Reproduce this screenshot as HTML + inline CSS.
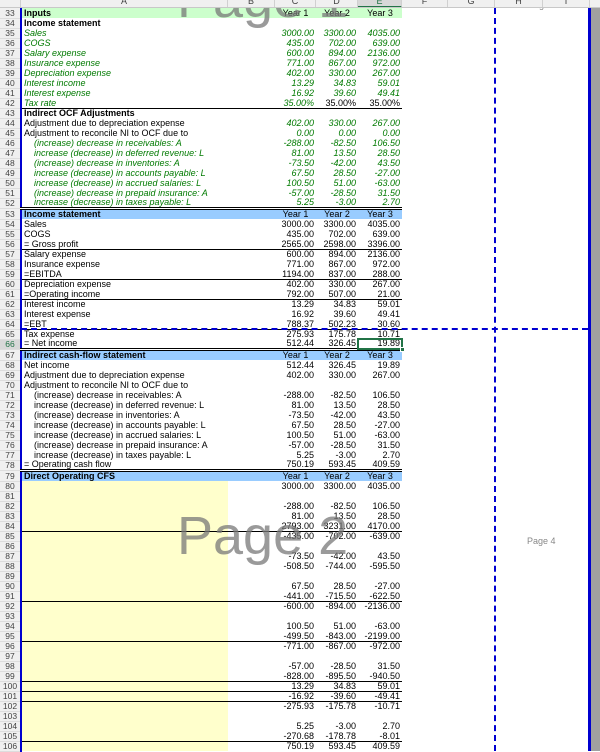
<!DOCTYPE html>
<html><head><meta charset="utf-8"><style>
*{margin:0;padding:0;box-sizing:border-box}
body{width:600px;height:751px;overflow:hidden;background:#fff;font-family:"Liberation Sans",sans-serif;position:relative}
#hdr{position:absolute;left:0;top:0;width:600px;height:8px;background:#f0f0f0;border-bottom:1px solid #c8c8c8;overflow:hidden;z-index:5}
#hdr div{position:absolute;top:-4px;height:12px;font-size:9px;color:#444;text-align:center;border-right:1px solid #d0d0d0}
table{position:absolute;left:0;top:8px;border-collapse:collapse;table-layout:fixed;font-size:9px;line-height:9px}
td{height:10px;padding:0 2px;white-space:nowrap;overflow:hidden;vertical-align:bottom}
td.h{background:#f0f0f0;color:#444;text-align:center;border-right:2px solid #0000d0;border-bottom:1px solid #ddd;font-size:8.5px;padding:0}
td.n{text-align:right}
tr.g td.l,tr.g td.n{color:#007a00;font-style:italic}
tr.b td.l{font-weight:bold}
tr.in td.l{padding-left:12px}
tr.lg td:not(.h){background:#ccffcc}
tr.bl td:not(.h){background:#99ccff}
tr.y td.l{background:#ffffcc}
tr.u td:not(.h){border-bottom:1px solid #000}
tr.d td:not(.h){border-bottom:3px double #000}
td.c{text-align:center}
.wm{position:absolute;font-size:54px;color:rgba(120,120,120,.75);line-height:1}
</style></head><body>
<div id="hdr">
<div style="left:0;width:21px"></div>
<div style="left:21px;width:207px">A</div>
<div style="left:228px;width:47px">B</div>
<div style="left:275px;width:41px">C</div>
<div style="left:316px;width:42px">D</div>
<div style="left:358px;width:44px;background:#d8d8d8;border-bottom:2px solid #217346;color:#217346">E</div>
<div style="left:402px;width:46px">F</div>
<div style="left:448px;width:47px">G</div>
<div style="left:495px;width:48px">H</div>
<div style="left:543px;width:47px">I</div>
</div>
<table>
<colgroup><col style="width:21px"><col style="width:207px"><col style="width:47px"><col style="width:41px"><col style="width:42px"><col style="width:44px"></colgroup>
<tr class="lg b"><td class="h">33</td><td class="l">Inputs</td><td></td><td class="c">Year 1</td><td class="c">Year 2</td><td class="c">Year 3</td></tr>
<tr class="b"><td class="h">34</td><td class="l">Income statement</td><td></td><td></td><td></td><td></td></tr>
<tr class="g"><td class="h">35</td><td class="l">Sales</td><td></td><td class="n">3000.00</td><td class="n">3300.00</td><td class="n">4035.00</td></tr>
<tr class="g"><td class="h">36</td><td class="l">COGS</td><td></td><td class="n">435.00</td><td class="n">702.00</td><td class="n">639.00</td></tr>
<tr class="g"><td class="h">37</td><td class="l">Salary expense</td><td></td><td class="n">600.00</td><td class="n">894.00</td><td class="n">2136.00</td></tr>
<tr class="g"><td class="h">38</td><td class="l">Insurance expense</td><td></td><td class="n">771.00</td><td class="n">867.00</td><td class="n">972.00</td></tr>
<tr class="g"><td class="h">39</td><td class="l">Depreciation expense</td><td></td><td class="n">402.00</td><td class="n">330.00</td><td class="n">267.00</td></tr>
<tr class="g"><td class="h">40</td><td class="l">Interest income</td><td></td><td class="n">13.29</td><td class="n">34.83</td><td class="n">59.01</td></tr>
<tr class="g"><td class="h">41</td><td class="l">Interest expense</td><td></td><td class="n">16.92</td><td class="n">39.60</td><td class="n">49.41</td></tr>
<tr class="g u"><td class="h">42</td><td class="l">Tax rate</td><td></td><td class="n">35.00%</td><td class="n" style="color:#000;font-style:normal">35.00%</td><td class="n" style="color:#000;font-style:normal">35.00%</td></tr>
<tr class="b"><td class="h">43</td><td class="l">Indirect OCF Adjustments</td><td></td><td></td><td></td><td></td></tr>
<tr class="g"><td class="h">44</td><td class="l" style="color:#000;font-style:normal">Adjustment due to depreciation expense</td><td></td><td class="n">402.00</td><td class="n">330.00</td><td class="n">267.00</td></tr>
<tr class="g"><td class="h">45</td><td class="l" style="color:#000;font-style:normal">Adjustment to reconcile NI to OCF due to</td><td></td><td class="n">0.00</td><td class="n">0.00</td><td class="n">0.00</td></tr>
<tr class="g in"><td class="h">46</td><td class="l">(increase) decrease in receivables: A</td><td></td><td class="n">-288.00</td><td class="n">-82.50</td><td class="n">106.50</td></tr>
<tr class="g in"><td class="h">47</td><td class="l">increase (decrease) in deferred revenue: L</td><td></td><td class="n">81.00</td><td class="n">13.50</td><td class="n">28.50</td></tr>
<tr class="g in"><td class="h">48</td><td class="l">(increase) decrease in inventories: A</td><td></td><td class="n">-73.50</td><td class="n">-42.00</td><td class="n">43.50</td></tr>
<tr class="g in"><td class="h">49</td><td class="l">increase (decrease) in accounts payable: L</td><td></td><td class="n">67.50</td><td class="n">28.50</td><td class="n">-27.00</td></tr>
<tr class="g in"><td class="h">50</td><td class="l">increase (decrease) in accrued salaries: L</td><td></td><td class="n">100.50</td><td class="n">51.00</td><td class="n">-63.00</td></tr>
<tr class="g in"><td class="h">51</td><td class="l">(increase) decrease in prepaid insurance: A</td><td></td><td class="n">-57.00</td><td class="n">-28.50</td><td class="n">31.50</td></tr>
<tr class="g in d"><td class="h">52</td><td class="l">increase (decrease) in taxes payable: L</td><td></td><td class="n">5.25</td><td class="n">-3.00</td><td class="n">2.70</td></tr>
<tr class="bl b"><td class="h">53</td><td class="l">Income statement</td><td></td><td class="c">Year 1</td><td class="c">Year 2</td><td class="c">Year 3</td></tr>
<tr><td class="h">54</td><td class="l">Sales</td><td></td><td class="n">3000.00</td><td class="n">3300.00</td><td class="n">4035.00</td></tr>
<tr><td class="h">55</td><td class="l">COGS</td><td></td><td class="n">435.00</td><td class="n">702.00</td><td class="n">639.00</td></tr>
<tr class="u"><td class="h">56</td><td class="l">= Gross profit</td><td></td><td class="n">2565.00</td><td class="n">2598.00</td><td class="n">3396.00</td></tr>
<tr><td class="h">57</td><td class="l">Salary expense</td><td></td><td class="n">600.00</td><td class="n">894.00</td><td class="n">2136.00</td></tr>
<tr><td class="h">58</td><td class="l">Insurance expense</td><td></td><td class="n">771.00</td><td class="n">867.00</td><td class="n">972.00</td></tr>
<tr class="u"><td class="h">59</td><td class="l">=EBITDA</td><td></td><td class="n">1194.00</td><td class="n">837.00</td><td class="n">288.00</td></tr>
<tr><td class="h">60</td><td class="l">Depreciation expense</td><td></td><td class="n">402.00</td><td class="n">330.00</td><td class="n">267.00</td></tr>
<tr class="u"><td class="h">61</td><td class="l">=Operating income</td><td></td><td class="n">792.00</td><td class="n">507.00</td><td class="n">21.00</td></tr>
<tr><td class="h">62</td><td class="l">Interest income</td><td></td><td class="n">13.29</td><td class="n">34.83</td><td class="n">59.01</td></tr>
<tr><td class="h">63</td><td class="l">Interest expense</td><td></td><td class="n">16.92</td><td class="n">39.60</td><td class="n">49.41</td></tr>
<tr class="u"><td class="h">64</td><td class="l">=EBT</td><td></td><td class="n">788.37</td><td class="n">502.23</td><td class="n">30.60</td></tr>
<tr><td class="h">65</td><td class="l">Tax expense</td><td></td><td class="n">275.93</td><td class="n">175.78</td><td class="n">10.71</td></tr>
<tr class="d"><td class="h" style="color:#217346;background:#d8d8d8">66</td><td class="l">= Net income</td><td></td><td class="n">512.44</td><td class="n">326.45</td><td class="n">19.89</td></tr>
<tr class="bl b"><td class="h">67</td><td class="l">Indirect cash-flow statement</td><td></td><td class="c">Year 1</td><td class="c">Year 2</td><td class="c">Year 3</td></tr>
<tr><td class="h">68</td><td class="l">Net income</td><td></td><td class="n">512.44</td><td class="n">326.45</td><td class="n">19.89</td></tr>
<tr><td class="h">69</td><td class="l">Adjustment due to depreciation expense</td><td></td><td class="n">402.00</td><td class="n">330.00</td><td class="n">267.00</td></tr>
<tr><td class="h">70</td><td class="l">Adjustment to reconcile NI to OCF due to</td><td></td><td></td><td></td><td></td></tr>
<tr class="in"><td class="h">71</td><td class="l">(increase) decrease in receivables: A</td><td></td><td class="n">-288.00</td><td class="n">-82.50</td><td class="n">106.50</td></tr>
<tr class="in"><td class="h">72</td><td class="l">increase (decrease) in deferred revenue: L</td><td></td><td class="n">81.00</td><td class="n">13.50</td><td class="n">28.50</td></tr>
<tr class="in"><td class="h">73</td><td class="l">(increase) decrease in inventories: A</td><td></td><td class="n">-73.50</td><td class="n">-42.00</td><td class="n">43.50</td></tr>
<tr class="in"><td class="h">74</td><td class="l">increase (decrease) in accounts payable: L</td><td></td><td class="n">67.50</td><td class="n">28.50</td><td class="n">-27.00</td></tr>
<tr class="in"><td class="h">75</td><td class="l">increase (decrease) in accrued salaries: L</td><td></td><td class="n">100.50</td><td class="n">51.00</td><td class="n">-63.00</td></tr>
<tr class="in"><td class="h">76</td><td class="l">(increase) decrease in prepaid insurance: A</td><td></td><td class="n">-57.00</td><td class="n">-28.50</td><td class="n">31.50</td></tr>
<tr class="in"><td class="h">77</td><td class="l">increase (decrease) in taxes payable: L</td><td></td><td class="n">5.25</td><td class="n">-3.00</td><td class="n">2.70</td></tr>
<tr class="d"><td class="h">78</td><td class="l">= Operating cash flow</td><td></td><td class="n">750.19</td><td class="n">593.45</td><td class="n">409.59</td></tr>
<tr class="bl b"><td class="h">79</td><td class="l">Direct Operating CFS</td><td></td><td class="c">Year 1</td><td class="c">Year 2</td><td class="c">Year 3</td></tr>
<tr class="y"><td class="h">80</td><td class="l"></td><td></td><td class="n">3000.00</td><td class="n">3300.00</td><td class="n">4035.00</td></tr>
<tr class="y"><td class="h">81</td><td class="l"></td><td></td><td></td><td></td><td></td></tr>
<tr class="y"><td class="h">82</td><td class="l"></td><td></td><td class="n">-288.00</td><td class="n">-82.50</td><td class="n">106.50</td></tr>
<tr class="y"><td class="h">83</td><td class="l"></td><td></td><td class="n">81.00</td><td class="n">13.50</td><td class="n">28.50</td></tr>
<tr class="y u"><td class="h">84</td><td class="l"></td><td></td><td class="n">2793.00</td><td class="n">3231.00</td><td class="n">4170.00</td></tr>
<tr class="y"><td class="h">85</td><td class="l"></td><td></td><td class="n">-435.00</td><td class="n">-702.00</td><td class="n">-639.00</td></tr>
<tr class="y"><td class="h">86</td><td class="l"></td><td></td><td></td><td></td><td></td></tr>
<tr class="y"><td class="h">87</td><td class="l"></td><td></td><td class="n">-73.50</td><td class="n">-42.00</td><td class="n">43.50</td></tr>
<tr class="y"><td class="h">88</td><td class="l"></td><td></td><td class="n">-508.50</td><td class="n">-744.00</td><td class="n">-595.50</td></tr>
<tr class="y"><td class="h">89</td><td class="l"></td><td></td><td></td><td></td><td></td></tr>
<tr class="y"><td class="h">90</td><td class="l"></td><td></td><td class="n">67.50</td><td class="n">28.50</td><td class="n">-27.00</td></tr>
<tr class="y u"><td class="h">91</td><td class="l"></td><td></td><td class="n">-441.00</td><td class="n">-715.50</td><td class="n">-622.50</td></tr>
<tr class="y"><td class="h">92</td><td class="l"></td><td></td><td class="n">-600.00</td><td class="n">-894.00</td><td class="n">-2136.00</td></tr>
<tr class="y"><td class="h">93</td><td class="l"></td><td></td><td></td><td></td><td></td></tr>
<tr class="y"><td class="h">94</td><td class="l"></td><td></td><td class="n">100.50</td><td class="n">51.00</td><td class="n">-63.00</td></tr>
<tr class="y u"><td class="h">95</td><td class="l"></td><td></td><td class="n">-499.50</td><td class="n">-843.00</td><td class="n">-2199.00</td></tr>
<tr class="y"><td class="h">96</td><td class="l"></td><td></td><td class="n">-771.00</td><td class="n">-867.00</td><td class="n">-972.00</td></tr>
<tr class="y"><td class="h">97</td><td class="l"></td><td></td><td></td><td></td><td></td></tr>
<tr class="y"><td class="h">98</td><td class="l"></td><td></td><td class="n">-57.00</td><td class="n">-28.50</td><td class="n">31.50</td></tr>
<tr class="y u"><td class="h">99</td><td class="l"></td><td></td><td class="n">-828.00</td><td class="n">-895.50</td><td class="n">-940.50</td></tr>
<tr class="y u"><td class="h">100</td><td class="l"></td><td></td><td class="n">13.29</td><td class="n">34.83</td><td class="n">59.01</td></tr>
<tr class="y u"><td class="h">101</td><td class="l"></td><td></td><td class="n">-16.92</td><td class="n">-39.60</td><td class="n">-49.41</td></tr>
<tr class="y"><td class="h">102</td><td class="l"></td><td></td><td class="n">-275.93</td><td class="n">-175.78</td><td class="n">-10.71</td></tr>
<tr class="y"><td class="h">103</td><td class="l"></td><td></td><td></td><td></td><td></td></tr>
<tr class="y"><td class="h">104</td><td class="l"></td><td></td><td class="n">5.25</td><td class="n">-3.00</td><td class="n">2.70</td></tr>
<tr class="y u"><td class="h">105</td><td class="l"></td><td></td><td class="n">-270.68</td><td class="n">-178.78</td><td class="n">-8.01</td></tr>
<tr class="y"><td class="h">106</td><td class="l"></td><td></td><td class="n">750.19</td><td class="n">593.45</td><td class="n">409.59</td></tr>
</table>
<div style="position:absolute;left:357px;top:338px;width:46px;height:12px;border:2px solid #217346"></div>
<div style="position:absolute;left:400px;top:347px;width:5px;height:5px;background:#217346;border:1px solid #fff"></div>
<div style="position:absolute;left:0;top:8px;width:600px;height:743px;overflow:hidden;pointer-events:none">
<div class="wm" style="left:177px;top:-36px">Page 1</div>
<div class="wm" style="left:177px;top:501px">Page 2</div>
<div style="position:absolute;left:527px;top:528px;font-size:9px;color:#888">Page 4</div>
<div style="position:absolute;left:528px;top:-8px;font-size:9px;color:#888">Page 3</div>
</div>
<div style="position:absolute;left:494px;top:8px;width:0;height:743px;border-left:2px dashed #0000d0"></div>
<div style="position:absolute;left:21px;top:328px;width:567px;height:0;border-top:2px dashed #0000d0"></div>
<div style="position:absolute;left:588px;top:8px;width:3px;height:743px;background:#0000d0"></div>
<div style="position:absolute;left:591px;top:8px;width:9px;height:743px;background:#a0a0a0"></div>
</body></html>
